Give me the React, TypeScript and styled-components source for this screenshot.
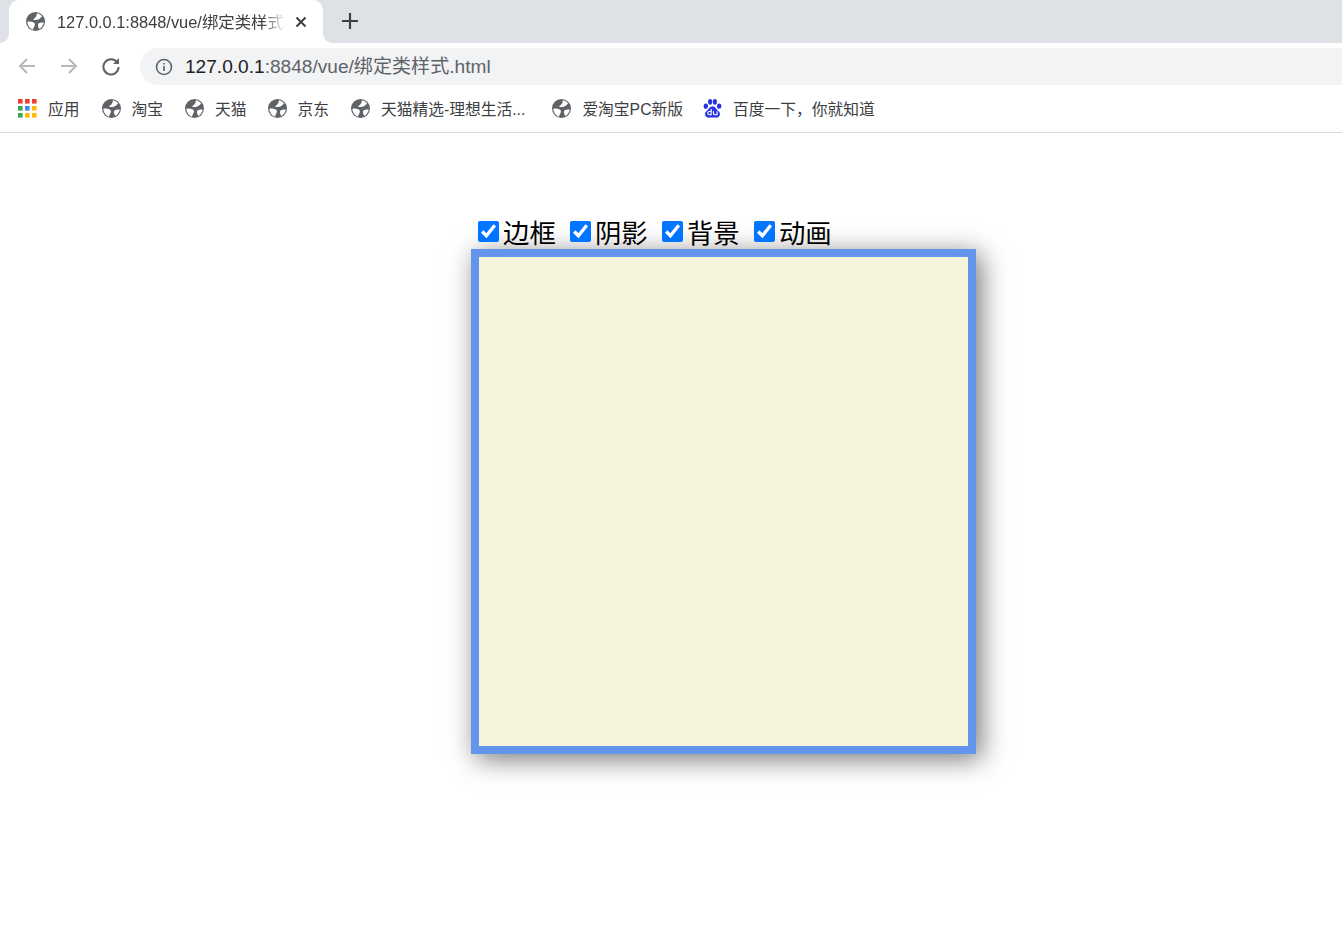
import React from "react"
import styled, { createGlobalStyle } from "styled-components"

const GlobalStyle = createGlobalStyle`
  html, body {
    margin: 0;
    padding: 0;
    background: #fff;
    overflow: hidden;
  }
  body {
    width: 1342px;
    height: 933px;
    font-family: "Liberation Sans", "Noto Sans CJK SC", sans-serif;
  }
`

const TabStrip = styled.div`
  height: 43px;
  background: #dee1e6;
  display: flex;
  align-items: flex-end;
  padding-left: 9px;
`

const Tab = styled.div`
  position: relative;
  width: 314px;
  height: 43px;
  background: #fff;
  border-radius: 10px 10px 0 0;
  display: flex;
  align-items: center;
  padding-left: 17px;
  box-sizing: border-box;

  &::before,
  &::after {
    content: "";
    position: absolute;
    bottom: 0;
    width: 9px;
    height: 9px;
    background: radial-gradient(circle at 0 0, #dee1e6 8.5px, #fff 9px);
  }
  &::before {
    left: -9px;
  }
  &::after {
    right: -9px;
    transform: scaleX(-1);
  }
`

const TabIconWrap = styled.span`
  display: flex;
  svg {
    width: 19px;
    height: 19px;
  }
`

const TabTitle = styled.span`
  width: 230px;
  margin-left: 12px;
  margin-bottom: 2px;
  font-size: 16.4px;
  color: #3c4043;
  white-space: nowrap;
  -webkit-mask-image: linear-gradient(to right, #000 205px, transparent 228px);
  mask-image: linear-gradient(to right, #000 205px, transparent 228px);
`

const TabClose = styled.svg`
  width: 12px;
  height: 12px;
  margin-left: 8px;
`

const NewTab = styled.svg`
  width: 18px;
  height: 18px;
  margin-left: 18px;
  margin-bottom: 13px;
`

const Toolbar = styled.div`
  height: 46px;
  background: #fff;
  display: flex;
  align-items: center;
  padding-left: 16px;
`

const NavIcon = styled.svg`
  width: 22px;
  height: 22px;
  margin-right: 20px;
`

const AddressBar = styled.div`
  flex: 1;
  height: 37px;
  margin: 1px -20px 0 -2px;
  border-radius: 19px;
  background: #f1f3f4;
  display: flex;
  align-items: center;
  padding-left: 15px;
  font-size: 19.1px;
`

const InfoIcon = styled.svg`
  width: 18px;
  height: 18px;
  margin-right: 12px;
`

const UrlText = styled.span`
  color: #5f6368;
  margin-bottom: 4px;
`

const Host = styled.span`
  color: #202124;
`

const BookmarksBar = styled.div`
  height: 44px;
  box-sizing: border-box;
  border-bottom: 1px solid #d9dadc;
  display: flex;
  align-items: center;
  padding-left: 18px;
  padding-bottom: 4px;
`

const Bookmark = styled.div<{ $gap: number }>`
  display: flex;
  align-items: center;
  margin-right: ${(p) => p.$gap}px;
  font-size: 15.75px;
  color: #3c4043;
  white-space: nowrap;
  svg {
    width: 19px;
    height: 19px;
    margin-right: 11px;
    flex: none;
  }
`

const Page = styled.main`
  padding: 84px 0 0 471px;
`

const Options = styled.div`
  height: 32px;
  display: flex;
  align-items: center;
  padding-left: 7px;
`

const Option = styled.label`
  display: flex;
  align-items: center;
  margin-right: 14.2px;
  margin-bottom: 2px;
  font-size: 26.4px;
  line-height: 32px;
  color: #000;
  font-family: "Noto Sans CJK SC", sans-serif;
`

const Check = styled.input`
  width: 21px;
  height: 21px;
  margin: 0 4px 2px 0;
  accent-color: #0075ff;
`

const Box = styled.div`
  width: 505px;
  height: 505px;
  box-sizing: border-box;
  border: 8px solid #6495ed;
  background: #f5f5dc;
  box-shadow: 5px 5px 25px #777;
`

const Globe = () => (
  <svg viewBox="0 0 20 20">
    <circle cx="10" cy="10" r="10" fill="#5f6368" />
    <path
      fill="#fff"
      d="M11.5 1.2 C14 1.8 16 3 17 4.5 C15.5 6.5 13.5 8.5 10.5 8.3 C8.8 8.2 7.8 8.5 7.5 7.5 C9.5 6.5 11.5 4 11.5 1.2 Z M1.3 10.5 C3 9.5 6 10 8.2 11 C10 12 9.5 14 8.5 15.5 C8 17 7.5 18 7 18.6 C4 17.5 2 14.5 1.3 10.5 Z M13 12 C15 11 17 11 18.7 11.3 C18.3 14 16.5 16.5 14 18 C13 16 12 14 13 12 Z"
    />
  </svg>
)

const AppsGrid = () => (
  <svg viewBox="0 0 19 19">
    {["#e94235", "#e94235", "#e94235", "#34a853", "#4285f4", "#fbbc04", "#34a853", "#fbbc04", "#fbbc04"].map((c, i) => (
      <rect key={i} x={(i % 3) * 7} y={Math.floor(i / 3) * 7} width="4.6" height="4.6" fill={c} />
    ))}
  </svg>
)

const BaiduPaw = () => (
  <svg viewBox="0 0 20 20">
    <g fill="#2932e1">
      <ellipse cx="3" cy="7.5" rx="2.3" ry="2.8" />
      <ellipse cx="7.5" cy="3" rx="2.2" ry="3" />
      <ellipse cx="12.5" cy="3" rx="2.2" ry="3" />
      <ellipse cx="17" cy="7.5" rx="2.3" ry="2.8" />
      <path d="M10 7.5 C7.5 7.5 6.5 10 5 11.5 C3 13 1.8 14.5 2.2 16.5 C2.7 19 5 20 7 19.6 C8.5 19.3 11.5 19.3 13 19.6 C15 20 17.3 19 17.8 16.5 C18.2 14.5 17 13 15 11.5 C13.5 10 12.5 7.5 10 7.5 Z" />
    </g>
    <path
      fill="none"
      stroke="#fff"
      strokeWidth="1.2"
      d="M8.6 10.5 V16.6 H6.8 C5.6 16.6 5 15.8 5 14.8 C5 13.8 5.7 13.2 6.8 13.2 H8.6 M11 13 V15.3 C11 16.2 11.6 16.6 12.4 16.6 H14.8 V13"
    />
  </svg>
)

const bookmarks: { name: string; gap: number; icon?: "apps" | "baidu" }[] = [
  { name: "应用", gap: 22, icon: "apps" },
  { name: "淘宝", gap: 22 },
  { name: "天猫", gap: 21 },
  { name: "京东", gap: 22 },
  { name: "天猫精选-理想生活...", gap: 27 },
  { name: "爱淘宝PC新版", gap: 20 },
  { name: "百度一下，你就知道", gap: 0, icon: "baidu" },
]

const options = ["边框", "阴影", "背景", "动画"]

export default function App() {
  return (
    <>
      <GlobalStyle />
      <TabStrip>
        <Tab>
          <TabIconWrap>
            <Globe />
          </TabIconWrap>
          <TabTitle>127.0.0.1:8848/vue/绑定类样式</TabTitle>
          <TabClose viewBox="0 0 12 12">
            <path d="M1.5 1.5 L10.5 10.5 M10.5 1.5 L1.5 10.5" stroke="#3c4043" strokeWidth="2" />
          </TabClose>
        </Tab>
        <NewTab viewBox="0 0 18 18">
          <path d="M9 1 V17 M1 9 H17" stroke="#3c4043" strokeWidth="2.2" />
        </NewTab>
      </TabStrip>
      <Toolbar>
        <NavIcon viewBox="0 0 22 22">
          <path d="M19 11 H4 M11 4 L4 11 L11 18" fill="none" stroke="#b6b8bb" strokeWidth="2" />
        </NavIcon>
        <NavIcon viewBox="0 0 22 22">
          <path d="M3 11 H18 M11 4 L18 11 L11 18" fill="none" stroke="#b6b8bb" strokeWidth="2" />
        </NavIcon>
        <NavIcon viewBox="0 0 22 22">
          <path d="M17.2 7.5 A7.6 7.6 0 1 0 18.6 12" fill="none" stroke="#5f6368" strokeWidth="2" />
          <path d="M19 3 V9 H13 Z" fill="#5f6368" />
        </NavIcon>
        <AddressBar>
          <InfoIcon viewBox="0 0 18 18">
            <circle cx="9" cy="9" r="7.5" fill="none" stroke="#5f6368" strokeWidth="1.6" />
            <path d="M9 8 V13 M9 5 V6.6" stroke="#5f6368" strokeWidth="1.7" />
          </InfoIcon>
          <UrlText>
            <Host>127.0.0.1</Host>:8848/vue/绑定类样式.html
          </UrlText>
        </AddressBar>
      </Toolbar>
      <BookmarksBar>
        {bookmarks.map((b) => (
          <Bookmark key={b.name} $gap={b.gap}>
            {b.icon === "apps" ? <AppsGrid /> : b.icon === "baidu" ? <BaiduPaw /> : <Globe />}
            {b.name}
          </Bookmark>
        ))}
      </BookmarksBar>
      <Page>
        <Options>
          {options.map((o) => (
            <Option key={o}>
              <Check type="checkbox" defaultChecked />
              {o}
            </Option>
          ))}
        </Options>
        <Box />
      </Page>
    </>
  )
}
